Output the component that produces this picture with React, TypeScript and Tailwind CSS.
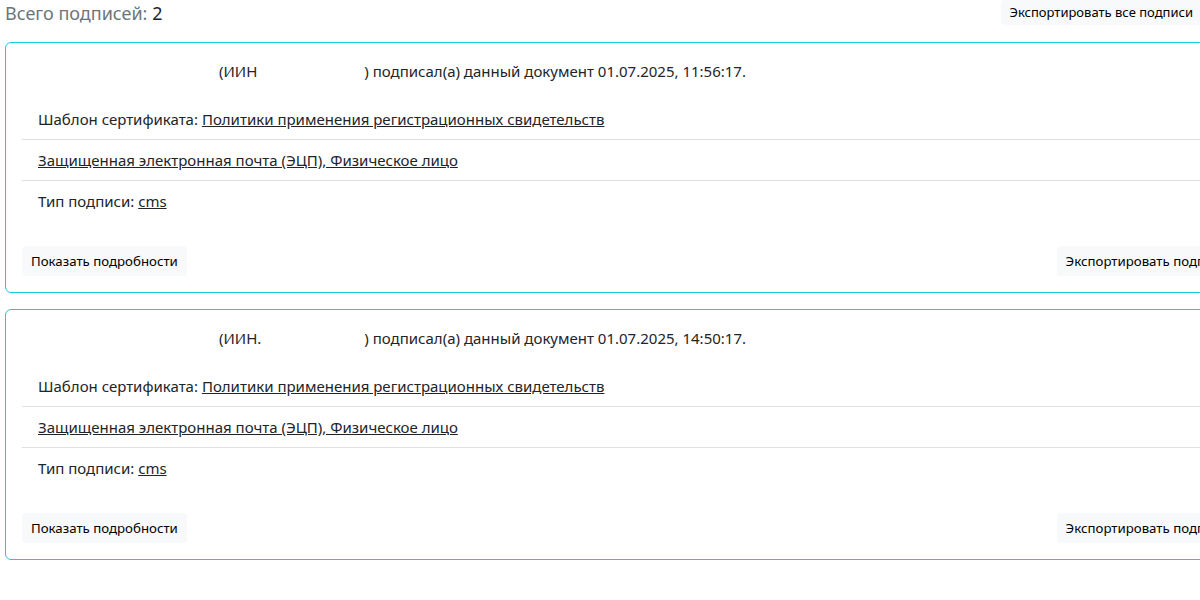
import React from "react";

const signatures = [
    { date: "01.07.2025, 11:56:17.", dot: false, border: "border-[#17cbe9]" },
    { date: "01.07.2025, 14:50:17.", dot: true, border: "border-[#2cc3dc]" },
];

export default function App() {
    return (
        <div className="w-[1200px] h-[600px] overflow-hidden bg-white text-[#212529]" style={{ fontFamily: '"Noto Sans", "Open Sans", sans-serif' }}>
            <div className="w-[1260px] pl-[5px]">
                {/* Header */}
                <div className="flex items-start justify-between w-[1197px] h-[26px]">
                    <h2 className="text-[18px] leading-[26px] text-[#6c757d]">
                        Всего подписей: <span className="text-[#212529]">2</span>
                    </h2>
                    <button className="h-[25px] px-[9px] bg-[#f8f9fa] rounded-[4px] text-[13px] leading-[25px] text-black whitespace-nowrap">
                        Экспортировать все подписи
                    </button>
                </div>

                <div className="mt-[16px] flex flex-col gap-[16px]">
                    {signatures.map((s, i) => (
                        <SignatureCard key={i} {...s} />
                    ))}
                </div>
            </div>
        </div>
    );
}

function SignatureCard({ date, dot, border }: any) {
    return (
        <div className={`w-[1249px] h-[251px] border ${border} rounded-[6px] px-[16px] pt-[16px] pb-[16px] flex flex-col`}>
            {/* signer line, name and IIN hidden */}
            <p className="text-[15px] leading-[24px] flex whitespace-nowrap">
                <span className="w-[197px]" />
                <span>(ИИН{dot ? "." : ""}</span>
                <span className={dot ? "w-[103px]" : "w-[107px]"} />
                <span>) подписал(а) данный документ {date}</span>
            </p>

            <ul className="mt-[16px] text-[15px] leading-[20px]">
                <li className="px-[16px] py-[10px] border-b border-[#dee2e6]">
                    Шаблон сертификата: <a className="underline">Политики применения регистрационных свидетельств</a>
                </li>
                <li className="px-[16px] py-[10px] border-b border-[#dee2e6]">
                    <a className="underline">Защищенная электронная почта (ЭЦП), Физическое лицо</a>
                </li>
                <li className="px-[16px] py-[10px]">
                    Тип подписи: <a className="underline">cms</a>
                </li>
            </ul>

            <div className="mt-auto flex justify-between">
                <button className="h-[30px] px-[9px] bg-[#f8f9fa] rounded-[4px] text-[13.25px] leading-[30px] text-black whitespace-nowrap">
                    Показать подробности
                </button>
                <button className="h-[30px] px-[9px] bg-[#f8f9fa] rounded-[4px] text-[13.25px] leading-[30px] text-black whitespace-nowrap">
                    Экспортировать подписи
                </button>
            </div>
        </div>
    );
}
